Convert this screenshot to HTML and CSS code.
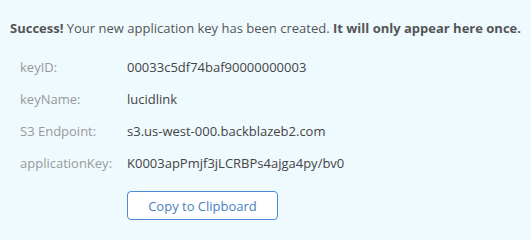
FILE: index.html
```html
<!DOCTYPE html>
<html>
<head>
<meta charset="utf-8">
<link rel="stylesheet" href="styles.css">
</head>
<body>
<div class="panel">
  <p class="notice"><strong>Success!</strong> Your new application key has been created. <strong>It will only appear here once.</strong></p>
  <div class="rows">
    <div class="row"><span class="label">keyID:</span><span class="value">00033c5df74baf90000000003</span></div>
    <div class="row"><span class="label">keyName:</span><span class="value">lucidlink</span></div>
    <div class="row"><span class="label">S3 Endpoint:</span><span class="value">s3.us-west-000.backblazeb2.com</span></div>
    <div class="row"><span class="label">applicationKey:</span><span class="value">K0003apPmjf3jLCRBPs4ajga4py/bv0</span></div>
  </div>
  <div class="actions"><button class="copy">Copy to Clipboard</button></div>
</div>
</body>
</html>
```
FILE: styles.css
```css
html, body {
  margin: 0;
  padding: 0;
  background: #effaff;
}
.panel {
  font-family: "Open Sans", sans-serif;
  font-size: 13px;
  color: #555;
  padding: 19px 10px 0 10px;
  width: 531px;
  height: 238px;
  box-sizing: border-box;
}
.notice {
  margin: 0;
  line-height: 18px;
  color: #555;
  white-space: nowrap;
}
.notice strong { font-weight: 700; }
.rows {
  margin-top: 14px;
  padding-left: 10px;
}
.row {
  display: flex;
  height: 32px;
  align-items: center;
}
.label {
  width: 107px;
  color: #999;
}
.value {
  color: #444;
}
.actions {
  padding-left: 117px;
  margin-top: 12px;
}
.copy {
  font-family: "Open Sans", sans-serif;
  font-size: 13px;
  width: 151px;
  height: 29px;
  background: #fff;
  color: #4a7fc4;
  border: 1px solid #4a8ad6;
  border-radius: 4px;
  padding: 0;
}
```
